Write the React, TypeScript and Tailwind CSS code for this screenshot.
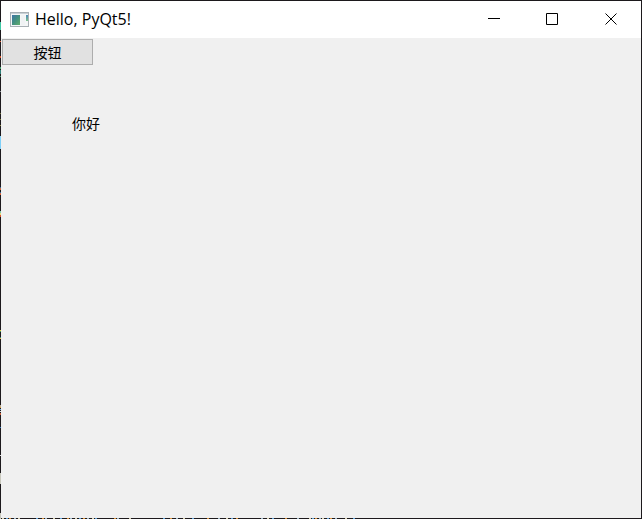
const leftFlecks = [
  { y: 22, h: 8, fill: '#3fc8a4' },
  { y: 41, h: 1, fill: '#e0603a' },
  { y: 56, h: 2, fill: '#d8552c' },
  { y: 67, h: 2, fill: '#3f9f6a' },
  { y: 70, h: 4, fill: '#2f7f78' },
  { y: 76, h: 1, fill: '#4f9a6c' },
  { y: 91, h: 1, fill: '#8a8f94' },
  { y: 113, h: 1, fill: '#6d6a3c' },
  { y: 119, h: 1, fill: '#7d7a44' },
  { y: 125, h: 1, fill: '#8d8a4c' },
  { y: 136, h: 13, fill: '#7fd0f8' },
  { y: 187, h: 1, fill: '#2f6a9a' },
  { y: 188, h: 2, fill: '#c8643a' },
  { y: 192, h: 1, fill: '#2f6a9a' },
  { y: 193, h: 2, fill: '#d8643a' },
  { y: 211, h: 2, fill: '#7fc8a8' },
  { y: 213, h: 2, fill: '#e8d878' },
  { y: 215, h: 2, fill: '#d8502c' },
  { y: 330, h: 1, fill: '#e8c03c' },
  { y: 331, h: 1, fill: '#3f9a5c' },
  { y: 337, h: 1, fill: '#2f8a7c' },
  { y: 338, h: 1, fill: '#e8b03c' },
  { y: 405, h: 2, fill: '#b8a890' },
  { y: 407, h: 1, fill: '#d8a03c' },
  { y: 409, h: 1, fill: '#6fa8e0' },
  { y: 411, h: 1, fill: '#d0d4d8' },
  { y: 413, h: 2, fill: '#c8603a' },
  { y: 427, h: 1, fill: '#2f7ac0' },
  { y: 455, h: 1, fill: '#d8d8d8' },
  { y: 473, h: 11, fill: '#c8c8bc' },
  { y: 513, h: 6, fill: '#c8c8bc' },
]

const bottomFlecks = [
  2, 6, 9, 14, 18, 36, 42, 45, 53, 60, 67, 70, 75, 79, 83, 87, 92, 95, 114, 117, 129, 163, 170, 176, 183, 192,
  207, 218, 226, 231, 236, 261, 267, 272, 285, 297, 309, 312, 315, 319, 322, 327, 330, 335, 345, 353,
]
const fleckColors = ['#d8d0b0', '#5fa0d8', '#d8903c', '#9fb8c8']

function DesktopBehind() {
  return (
    <svg className="pointer-events-none absolute inset-0 h-full w-full" aria-hidden="true" shapeRendering="crispEdges">
      {leftFlecks.map((fleck) => (
        <rect key={fleck.y} x="0" y={fleck.y} width="1" height={fleck.h} fill={fleck.fill} />
      ))}
      <svg y="100%" overflow="visible">
        {bottomFlecks.map((x, index) => (
          <rect key={x} x={x} y="-1" width="2" height="1" fill={fleckColors[index % fleckColors.length]} />
        ))}
      </svg>
    </svg>
  )
}

function AppIcon() {
  return (
    <svg width="19" height="15" viewBox="0 0 19 15" aria-hidden="true">
      <defs>
        <linearGradient id="pane" x1="0" y1="0" x2="1" y2="1">
          <stop offset="0" stopColor="#3f74a8" />
          <stop offset="0.5" stopColor="#43907f" />
          <stop offset="1" stopColor="#62ae6c" />
        </linearGradient>
        <linearGradient id="strip" x1="0" y1="0" x2="0" y2="1">
          <stop offset="0" stopColor="#4d86b8" />
          <stop offset="1" stopColor="#7cc48c" />
        </linearGradient>
      </defs>
      <rect x="0.5" y="0.5" width="18" height="14" fill="#f4f6f7" stroke="#a9b0b5" />
      <rect x="1" y="1" width="17" height="1" fill="#c8d0d6" />
      <rect x="2" y="3" width="8" height="10" fill="url(#pane)" />
      <rect x="11" y="3" width="4" height="10" fill="#f0f2f4" />
      <rect x="16" y="3" width="2" height="6" fill="url(#strip)" />
    </svg>
  )
}

const controls = [
  { label: 'Minimize', path: 'M0 5.5H12', size: 'w-[58px]' },
  { label: 'Maximize', path: 'M0.5 0.5H11.5V11.5H0.5Z', size: 'w-[58px]' },
  { label: 'Close', path: 'M0.5 0.5L11.5 11.5M11.5 0.5L0.5 11.5', size: 'w-[59px]' },
]

export default function App() {
  return (
    <div className="relative h-screen bg-[#1c191c] p-px font-['Open_Sans','Noto_Sans_CJK_SC',sans-serif] text-black">
      <DesktopBehind />
      <main className="flex h-full flex-col bg-[#f0f0f0]">
        <header className="flex h-[37px] shrink-0 items-center justify-between bg-white pr-px pb-px pl-[9px]">
          <div className="flex items-center gap-1.5">
            <AppIcon />
            <h1 className="text-[16px] leading-5">Hello, PyQt5!</h1>
          </div>
          <div className="flex h-full">
            {controls.map((control) => (
              <button key={control.label} type="button" aria-label={control.label} className={`${control.size} flex items-center justify-center`}>
                <svg width="12" height="12" viewBox="0 0 12 12" fill="none" stroke="black" aria-hidden="true">
                  <path d={control.path} />
                </svg>
              </button>
            ))}
          </div>
        </header>

        <section className="flex flex-col items-start p-px font-['Noto_Sans_CJK_SC',sans-serif]">
          <button type="button" className="flex h-[26px] w-[91px] items-center justify-center border border-[#adadad] bg-[#e1e1e1] text-sm">
            按钮
          </button>
          <p className="mt-12 ml-[70px] text-sm">你好</p>
        </section>
      </main>
    </div>
  )
}
